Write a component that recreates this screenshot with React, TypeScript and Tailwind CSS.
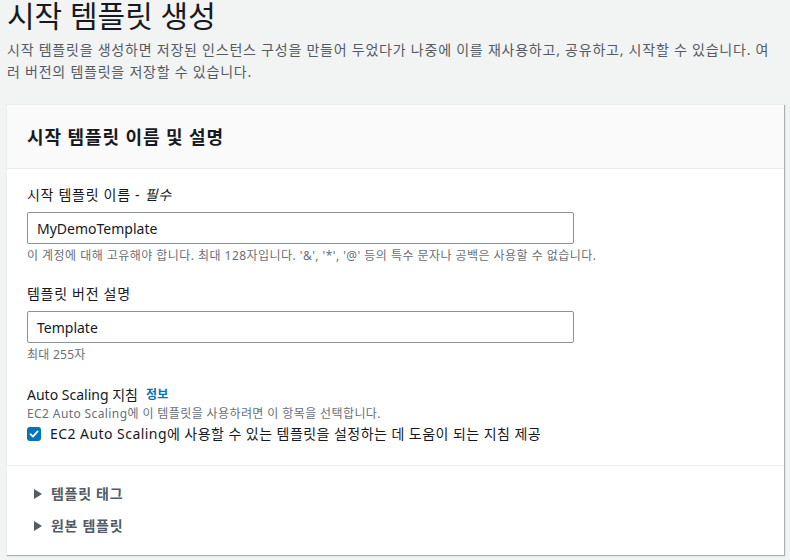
import React from "react";

export default function App() {
  return (
    <div
      className="w-[790px] h-[560px] overflow-hidden bg-[#f2f3f3] text-[#16191f]"
      style={{ fontFamily: '"Noto Sans", "Noto Sans CJK KR", sans-serif' }}
    >
      <div className="px-[7px]">
        <h1 className="text-[30px] leading-[32px] text-[#16191f] font-normal">
          시작 템플릿 생성
        </h1>
        <p className="mt-[7px] text-[14px] leading-[22px] text-[#545b64] tracking-[0.055em] whitespace-nowrap">
          시작 템플릿을 생성하면 저장된 인스턴스 구성을 만들어 두었다가 나중에 이를 재사용하고, 공유하고, 시작할 수 있습니다. 여
          <br />
          러 버전의 템플릿을 저장할 수 있습니다.
        </p>
      </div>

      <div className="mx-[6px] mt-[21px] w-[778px] bg-white border-l border-t border-[#eaeded] shadow-[1px_1px_1px_0_rgba(0,28,36,0.3)]">
        <div className="h-[64px] flex items-center px-[20px] bg-[#fafafa] border-b border-[#eaeded]">
          <h2 className="text-[18px] font-bold leading-[24px] text-[#16191f] tracking-[0.05em]">
            시작 템플릿 이름 및 설명
          </h2>
        </div>

        <div className="px-[20px] pt-[15px] pb-[20px] border-b border-[#eaeded]">
          <div className="text-[14px] leading-[22px] text-[#16191f] tracking-[0.05em]">
            시작 템플릿 이름 - <i>필수</i>
          </div>
          <div className="mt-[6px] w-[547px] h-[32px] border border-[#879596] rounded-[2px] flex items-center px-[9px] text-[14px] text-[#16191f]">
            MyDemoTemplate
          </div>
          <div className="mt-[3px] text-[12px] leading-[18px] text-[#687078] tracking-[0.038em]">
            이 계정에 대해 고유해야 합니다. 최대 128자입니다. '&amp;', '*', '@' 등의 특수 문자나 공백은 사용할 수 없습니다.
          </div>

          <div className="mt-[18px] text-[14px] leading-[22px] text-[#16191f] tracking-[0.05em]">
            템플릿 버전 설명
          </div>
          <div className="mt-[6px] w-[547px] h-[32px] border border-[#879596] rounded-[2px] flex items-center px-[9px] text-[14px] text-[#16191f]">
            Template
          </div>
          <div className="mt-[3px] text-[12px] leading-[18px] text-[#687078] tracking-[0.02em]">
            최대 255자
          </div>

          <div className="mt-[20px] text-[14px] leading-[22px] text-[#16191f] flex items-center">
            <span>Auto Scaling 지침</span>
            <span className="ml-[8px] text-[12px] font-bold text-[#0073bb] tracking-[0.03em]">정보</span>
          </div>
          <div className="text-[12px] leading-[16px] text-[#687078] tracking-[0.033em]">
            EC2 Auto Scaling에 이 템플릿을 사용하려면 이 항목을 선택합니다.
          </div>
          <div className="mt-[1px] flex items-center">
            <div className="w-[14px] h-[14px] rounded-[3px] bg-[#0073bb] flex items-center justify-center">
              <svg width="10" height="10" viewBox="0 0 10 10">
                <path d="M1.5 5.2 L4 7.6 L8.6 2.4" fill="none" stroke="white" strokeWidth="1.8" strokeLinecap="round" strokeLinejoin="round" />
              </svg>
            </div>
            <span className="ml-[9px] text-[14px] leading-[22px] text-[#16191f] tracking-[0.032em]">
              EC2 Auto Scaling에 사용할 수 있는 템플릿을 설정하는 데 도움이 되는 지침 제공
            </span>
          </div>
        </div>

        <div className="px-[27px] pt-[17px] pb-[18px] flex flex-col gap-[10px]">
          {["템플릿 태그", "원본 템플릿"].map((t) => (
            <div key={t} className="flex items-center h-[22px]">
              <svg width="8" height="10" viewBox="0 0 8 10">
                <path d="M0 0 L8 5 L0 10 Z" fill="#545b64" />
              </svg>
              <span className="ml-[9px] text-[14px] font-bold leading-[22px] text-[#545b64] tracking-[0.05em]">{t}</span>
            </div>
          ))}
        </div>
      </div>
    </div>
  );
}
